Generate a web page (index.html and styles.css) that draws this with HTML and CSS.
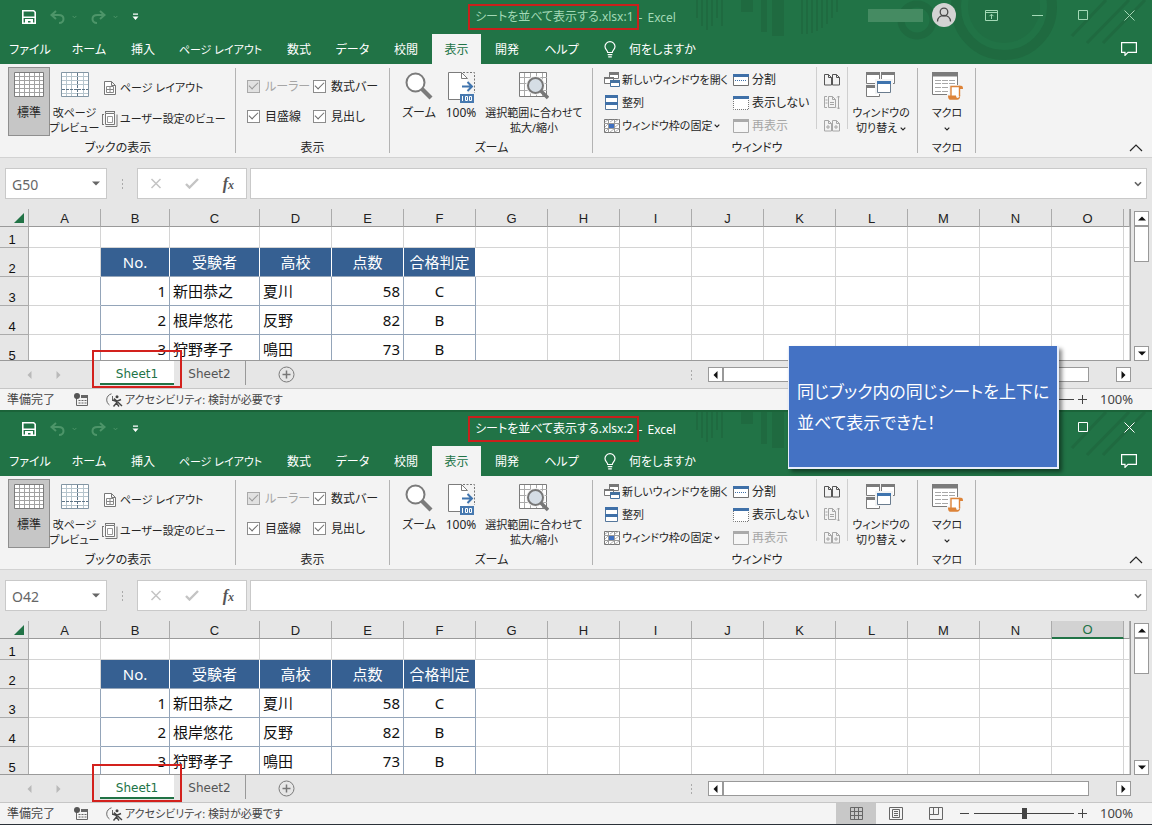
FILE: index.html
```html
<!DOCTYPE html>
<html lang="ja">
<head>
<meta charset="utf-8">
<meta name="viewport" content="width=device-width, initial-scale=1">
<title>シートを並べて表示する.xlsx - Excel</title>
<link rel="stylesheet" href="styles.css">
<script src="app.js" defer></script>
</head>
<body>

<svg class="sprite" aria-hidden="true">
  <symbol id="i-save" viewBox="0 0 14 14"><path d="M.8.8h10.9l1.5 1.5v10.9H.8z" fill="none" stroke="currentColor" stroke-width="1.6"/><path d="M1 6.5h12V8H1zM3 9h8v4.500H8.500V11H6v2.500H3z" fill="currentColor"/></symbol>
  <symbol id="i-undo" viewBox="0 0 15 14"><path d="M6 1 1.500 5 6 9M2 5h6.500c3.500 0 5 2 5 4s-1.500 4-4.500 4" fill="none" stroke="currentColor" stroke-width="2"/></symbol>
  <symbol id="i-redo" viewBox="0 0 15 14"><path d="M9 1l4.500 4L9 9M13 5H6.500c-3.500 0-5 2-5 4s1.500 4 4.500 4" fill="none" stroke="currentColor" stroke-width="2"/></symbol>
  <symbol id="i-custom" viewBox="0 0 7 8"><path d="M1 .5h5v1.200H1zM.5 3.500h6L3.500 7z" fill="currentColor"/></symbol>
  <symbol id="i-chev" viewBox="0 0 6 4"><path d="M.7.7 3 3 5.300.7" fill="none" stroke="currentColor" stroke-width="1.200"/></symbol>
  <symbol id="i-user" viewBox="0 0 24 24"><circle cx="12" cy="12" r="12" fill="#d3d3d3"/><circle cx="12" cy="9" r="3.800" fill="none" stroke="#4a4a4a" stroke-width="1.300"/><path d="M5.500 18.500c0-8 13-8 13 0" fill="none" stroke="#4a4a4a" stroke-width="1.300"/></symbol>
  <symbol id="i-ribbonopt" viewBox="0 0 13 11"><path d="M.5.5h12v10H.5zM.5 2.500h12M6.500 9V4.500M4.500 6.200l2-2 2 2" fill="none" stroke="currentColor"/></symbol>
  <symbol id="i-min" viewBox="0 0 11 11"><path d="M0 5.500h11" stroke="currentColor"/></symbol>
  <symbol id="i-max" viewBox="0 0 11 11"><path d="M.5.5h9v9h-9z" fill="none" stroke="currentColor"/></symbol>
  <symbol id="i-close" viewBox="0 0 11 11"><path d="M.5.5l10 10M10.500.5l-10 10" stroke="currentColor"/></symbol>
  <symbol id="i-comment" viewBox="0 0 16 14"><path d="M.6.6h14.800v9.800H7l-3 3v-3H.6z" fill="none" stroke="currentColor" stroke-width="1.200"/></symbol>
  <symbol id="i-bulb" viewBox="0 0 12 17"><path d="M3.700 11.500c0-2-2.700-2.800-2.700-5.900a5 5 0 0 1 10 0c0 3.100-2.700 3.900-2.700 5.900zM3.700 13.700h4.600M4.200 15.900h3.600" fill="none" stroke="currentColor" stroke-width="1.200"/></symbol>

  <symbol id="i-normal" viewBox="0 0 30 25"><path d="M.5.5h29v24H.5z" fill="#fff" stroke="#7c7c7c"/><path d="M5.500 1v23M10.500 1v23M15.500 1v23M20.500 1v23M25.500 1v23M1 4.500h28M1 8.500h28M1 12.500h28M1 16.500h28M1 20.500h28" stroke="#a2a2a2"/></symbol>
  <symbol id="i-break" viewBox="0 0 28 25"><path d="M.5.500h27v24H.5z" fill="#fff" stroke="#8396a4"/><path d="M5.500 1v23M10.500 1v23M22.500 1v23M1 4.500h26M1 8.500h26M1 12.500h26M1 21.500h26" stroke="#b6c5cd"/><path d="M16.500 1v23M1 17.500h26" stroke="#5d7486" stroke-dasharray="3 1"/></symbol>
  <symbol id="i-page" viewBox="0 0 12 14"><path d="M.5.5h7l4 4v9H.5zM7.500.5v4h4" fill="#fff" stroke="#777"/><path d="M2.500 5.500h7v6h-7zM2.500 8.500h7M6 5.500v6" fill="none" stroke="#888"/></symbol>
  <symbol id="i-userview" viewBox="0 0 16 16"><path d="M3.500 2.500h9v11h-9z" fill="#fff" stroke="#777"/><path d="M5.500 5.500h5v6h-5z" fill="#fff" stroke="#999"/><path d="M3.500.5h9M3.500 0v2M12.500 0v2M.5 3.500v10M0 3.500h2M0 13.500h2M15 3.500v12H3.500" fill="none" stroke="#777"/></symbol>
  <symbol id="i-zoom" viewBox="0 0 28 28"><path d="m17 17 9 9" stroke="#7b7b7b" stroke-width="4.200"/><circle cx="10.500" cy="10.500" r="9" fill="#fff" stroke="#7b7b7b" stroke-width="2"/></symbol>
  <symbol id="i-full" viewBox="0 0 27 31"><path d="M.5.500h13l6 6V27H.5z" fill="#fff"/><path d="M12 27.500H.5V.5h13l6 6M13.500.5v6h6" fill="none" stroke="#7c7c7c"/><path d="M15 .5h11.500V21" fill="none" stroke="#777" stroke-dasharray="2 1.500"/><path d="M14 14.500h9M19.500 10l4.500 4.500-4.500 4.500" fill="none" stroke="#3f74ae" stroke-width="2"/><path d="M12 22h14v9H12z" fill="#4779b0"/><path d="M14.500 24v5M17.500 24.500h2v4h-2zM21.500 24.500h2v4h-2z" fill="none" stroke="#fff"/></symbol>
  <symbol id="i-sel" viewBox="0 0 30 28"><path d="M.5.5h27v24H.5z" fill="#fff" stroke="#7c7c7c"/><path d="M5.500 1v23M11.500 1v23M17.500 1v23M23.500 1v23M1 5.500h27M1 11.500h27M1 18.500h27" stroke="#aaa"/><circle cx="16.500" cy="13.500" r="8" fill="#f6f6f6" stroke="#f3f3f3" stroke-width="3"/><circle cx="16.500" cy="13.500" r="7.500" fill="#d5dde5" stroke="#777" stroke-width="2"/><path d="m22 19 7 7" stroke="#777" stroke-width="3.500"/></symbol>
  <symbol id="i-new" viewBox="0 0 16 15"><path d="M5.500.5h9v6h-9z" fill="#fff" stroke="#777"/><path d="M5 0h10v3H5z" fill="#777"/><path d="M.5 5.500h9v6h-9z" fill="#fff" stroke="#777"/><path d="M0 5h10v2H0z" fill="#777"/><path d="M6.500 8.500h9v6h-9z" fill="#fff" stroke="#44719f"/><path d="M6 8h10v3H6z" fill="#44719f"/></symbol>
  <symbol id="i-arr" viewBox="0 0 16 15"><path d="M1.500.5h12v14h-12z" fill="#fff" stroke="#55779c"/><path d="M1 0h13v3H1zM1 7h13v3H1z" fill="#3f70a8"/></symbol>
  <symbol id="i-freeze" viewBox="0 0 16 14"><path d="M.5.5h15v13H.5z" fill="#fff" stroke="#777"/><path d="M4.500.5v13M10.500.5v13M0 4.500h16M0 9.500h16" fill="none" stroke="#9a9a9a"/><path d="M1 3l3-2M1 8l3-3M11 3l4-3M1 13l3-3M6 13l4-3M11 8l4-3M11 13l4-3M6 3l3-2" fill="none" stroke="#b4b4b4"/><path d="M5 5h5v4H5z" fill="#3f70c0"/></symbol>
  <symbol id="i-split" viewBox="0 0 16 12"><path d="M.5.5h15v11H.5z" fill="#fff" stroke="#6f6f6f"/><path d="M0 0h16v3H0z" fill="#3f70a8"/><path d="M2 6.500h12" stroke="#3f70a8" stroke-dasharray="1 1"/></symbol>
  <symbol id="i-hide" viewBox="0 0 16 14"><path d="M.5 3v10.500h15V3" fill="#fff" stroke="#777" stroke-dasharray="1 1"/><path d="M0 0h16v3H0z" fill="#3f70a8"/></symbol>
  <symbol id="i-show" viewBox="0 0 16 14"><path d="M.5.500h15v13H.5z" fill="#f6f6f6" stroke="#aaa"/><path d="M0 0h16v3H0z" fill="#aaa"/></symbol>
  <symbol id="i-side" viewBox="0 0 16 12"><path d="M.5.500h4l3 3v7.500h-7zM8.500.5h4l3 3v7.500h-7zM4.500.5v3h3M12.500.5v3h3" fill="none" stroke="currentColor"/></symbol>
  <symbol id="i-sync" viewBox="0 0 16 15"><path d="M3 1.500H.5v11H3M4.500 1.500h4l3 3v8h-7zM8.500 1.500v3h3M6 7.500h4M6 9.500h4M1.500 5h2M1.500 8h2M14.500 1v13M13 2.500l1.500-1.500L16 2.500M13 12.500l1.500 1.500 1.500-1.500" fill="none" stroke="currentColor"/></symbol>
  <symbol id="i-reset" viewBox="0 0 16 12"><path d="M.5.500h4l3 3v7.500h-7zM8.500.5h4l3 3v7.500h-7zM4.500.5v3h3M12.500.5v3h3M2 7h4M4 5v4M10 7h4M12 5v4" fill="none" stroke="currentColor"/></symbol>
  <symbol id="i-switch" viewBox="0 0 30 25"><path d="M.5.5h13v11H.5zM15.500.5h13v11h-13zM.5 13.500h13v11H.5z" fill="#fff" stroke="#7b7b7b"/><path d="M0 0h14v3H0zM15 0h14v3H15zM0 13h14v3H0z" fill="#7b7b7b"/><path d="M10.500 8.500h15v12h-15z" fill="#fff" stroke="#f3f3f3" stroke-width="3"/><path d="M11.500 9.500h13v11h-13z" fill="#fff" stroke="#6a7c8e"/><path d="M11 9h14v3H11z" fill="#3f74ae"/></symbol>
  <symbol id="i-macro" viewBox="0 0 31 28"><path d="M.5.5h25v22H.5z" fill="#fff" stroke="#7b7b7b"/><path d="M0 0h26v4.500H0z" fill="#7b7b7b"/><path d="M3 8.500h20M3 11.500h20M3 15.500h20M3 19.500h13" stroke="#a7a7a7" stroke-dasharray="6 1"/><path d="M17 13h13v6h-2v8H15v-5h2z" fill="#f3f3f3"/><path d="M19 24V14.500h8.500V24" fill="#fff" stroke="#dd8338" stroke-width="1.400"/><path d="M27 13.800h2c1.500 0 2 1 2 3.200h-3zM16 23.500h8c0 1.500.5 2.500 1.500 2.500s2-1 2-2.500h.7c0 3-1.200 4.200-3 4.200h-7c-1.500 0-2.200-1.500-2.200-4.200z" fill="#dd8338"/></symbol>
  <symbol id="i-up" viewBox="0 0 14 8"><path d="M1 7l6-6 6 6" fill="none" stroke="currentColor" stroke-width="1.200"/></symbol>

  <symbol id="i-cancel" viewBox="0 0 12 11"><path d="M1.500 1l9 9M10.500 1l-9 9" stroke="currentColor" stroke-width="1.500"/></symbol>
  <symbol id="i-ok" viewBox="0 0 14 11"><path d="M1 6l3.500 3.500L13 1" fill="none" stroke="currentColor" stroke-width="2.400"/></symbol>
  <symbol id="i-tri-d" viewBox="0 0 8 5"><path d="M0 .5h8l-4 4z" fill="currentColor"/></symbol>
  <symbol id="i-tri-u" viewBox="0 0 8 5"><path d="M0 4.500h8l-4-4z" fill="currentColor"/></symbol>
  <symbol id="i-tri-l" viewBox="0 0 5 8"><path d="M4.500 0v8l-4-4z" fill="currentColor"/></symbol>
  <symbol id="i-tri-r" viewBox="0 0 5 8"><path d="M.5 0v8l4-4z" fill="currentColor"/></symbol>
  <symbol id="i-corner" viewBox="0 0 10 10"><path d="M10 0v10H0z" fill="#217346"/></symbol>
  <symbol id="i-add" viewBox="0 0 17 17"><circle cx="8.500" cy="8.500" r="7.500" fill="none" stroke="#7b7b7b"/><path d="M4.500 8.500h8M8.500 4.500v8" stroke="#777" stroke-width="1.500"/></symbol>
  <symbol id="i-rec" viewBox="0 0 14 13"><path d="M2.500 5v7.500h11v-10H7" fill="none" stroke="#666"/><path d="M7 2h7v3H7zM4.500 7h2v1h-2zM7.500 7h2v1h-2zM10.500 7h2v1h-2zM4.500 9.500h2v1h-2zM7.500 9.500h2v1h-2zM10.500 9.500h2v1h-2z" fill="#666"/><circle cx="3" cy="3" r="3" fill="#555"/></symbol>
  <symbol id="i-acc" viewBox="0 0 17 14"><path d="M5.500.8C-.5 2.500-.5 9.500 3.500 12M6.500 3v5" fill="none" stroke="#666"/><circle cx="11" cy="3.800" r="1.500" fill="#444"/><path d="M6.500 7l4 1.500L15 6.500M10.500 8v2L7.500 13.500M10.500 10l2.500 3.500M8 5.500l8 7.500" fill="none" stroke="#444" stroke-width="1.400"/></symbol>
  <symbol id="i-vgrid" viewBox="0 0 13 13"><path d="M.5.5h12v12H.5zM4.500.5v12M8.500.5v12M.5 4.500h12M.5 8.500h12" fill="none" stroke="#666"/></symbol>
  <symbol id="i-vpage" viewBox="0 0 14 13"><path d="M.5.500h13v12H.5zM3.500 2.500h7v8h-7zM5 4.500h4M5 6.500h4M5 8.500h4" fill="none" stroke="#666"/></symbol>
  <symbol id="i-vbreak" viewBox="0 0 14 13"><path d="M.5.500h13v12H.5zM4.500.5v7M9.500.5v7h-9" fill="none" stroke="#666"/></symbol>
  <symbol id="i-art" viewBox="0 0 460 64">
    <g fill="none" stroke="#1f6a40">
      <path d="M5 0v18M10 0v26M15 0v30M20 0v26M25 0v18M30 0v26" stroke-width="2"/>
      <path d="M55 0v12M86 0v36" stroke-width="12"/><path d="M72 0v32" stroke-width="6"/>
      <path d="M110 0v34M115 0v34M120 0v33M125 0v31M130 0v28M135 0v24M140 0v18M145 0v12" stroke-width="2"/>
      <circle cx="225" cy="20" r="16" stroke-width="7"/>
      <circle cx="312" cy="7" r="48" stroke-width="10"/>
      <path d="M395 43l42-43M411 43l42-43M380 36l34-36" stroke-width="3"/>
    </g>
    <circle cx="312" cy="7" r="36" fill="#206e43"/>
  </symbol>
</svg>

<main class="desktop" id="desktop"></main>
<aside class="callout">同じブック内の同じシートを上下に<br>並べて表示できた！</aside>

<template id="window-template">
  <section class="window">
    <div class="top">
      <svg class="art" aria-hidden="true"><use href="#i-art"/></svg>
      <header class="titlebar">
        <div class="quick">
          <button class="bare" aria-label="上書き保存"><svg width="14" height="14"><use href="#i-save"/></svg></button>
          <button class="bare dim" aria-label="元に戻す"><svg width="15" height="14"><use href="#i-undo"/></svg><svg width="5" height="4"><use href="#i-chev"/></svg></button>
          <button class="bare dim" aria-label="やり直し"><svg width="15" height="14"><use href="#i-redo"/></svg><svg width="5" height="4"><use href="#i-chev"/></svg></button>
          <button class="bare" aria-label="クイック アクセス ツール バーのユーザー設定"><svg width="7" height="8"><use href="#i-custom"/></svg></button>
        </div>
        <h1 class="title"><span class="file marked"></span><span class="dash">-</span><span>Excel</span></h1>
        <div class="right">
          <div class="account"><span class="account-name"></span><svg width="24" height="24"><use href="#i-user"/></svg></div>
          <div class="controls">
            <button class="bare" aria-label="リボンの表示オプション"><svg width="13" height="11"><use href="#i-ribbonopt"/></svg></button>
            <button class="bare" aria-label="最小化"><svg width="11" height="11"><use href="#i-min"/></svg></button>
            <button class="bare" aria-label="最大化"><svg width="11" height="11"><use href="#i-max"/></svg></button>
            <button class="bare" aria-label="閉じる"><svg width="11" height="11"><use href="#i-close"/></svg></button>
          </div>
        </div>
      </header>

      <nav class="tabs">
        <button class="tab">ファイル</button><button class="tab">ホーム</button><button class="tab">挿入</button><button class="tab long">ページ レイアウト</button><button class="tab">数式</button><button class="tab">データ</button><button class="tab">校閲</button><button class="tab active">表示</button><button class="tab">開発</button><button class="tab">ヘルプ</button>
        <button class="tab tell"><svg width="12" height="17"><use href="#i-bulb"/></svg>何をしますか</button>
        <button class="bare comment" aria-label="コメント"><svg width="16" height="14"><use href="#i-comment"/></svg></button>
      </nav>
    </div>

    <div class="ribbon">
      <div class="group g-book">
        <div class="tools">
          <button class="big pressed"><svg width="30" height="25"><use href="#i-normal"/></svg><span>標準</span></button>
          <button class="big tight"><svg width="28" height="25"><use href="#i-break"/></svg><span>改ページ<br>プレビュー</span></button>
          <div class="stack two tight">
            <button class="small"><svg width="16" height="14"><use href="#i-page"/></svg>ページ レイアウト</button>
            <button class="small"><svg width="16" height="16"><use href="#i-userview"/></svg>ユーザー設定のビュー</button>
          </div>
        </div>
        <div class="caption">ブックの表示</div>
      </div>
      <div class="group g-show">
        <div class="tools checks">
          <label class="check off"><input type="checkbox" checked disabled>ルーラー</label>
          <label class="check"><input type="checkbox" checked>数式バー</label>
          <label class="check"><input type="checkbox" checked>目盛線</label>
          <label class="check"><input type="checkbox" checked>見出し</label>
        </div>
        <div class="caption">表示</div>
      </div>
      <div class="group g-zoom">
        <div class="tools">
          <button class="big"><svg width="28" height="28"><use href="#i-zoom"/></svg><span>ズーム</span></button>
          <button class="big"><svg width="27" height="31"><use href="#i-full"/></svg><span>100%</span></button>
          <button class="big wide tight"><svg width="30" height="28"><use href="#i-sel"/></svg><span>選択範囲に合わせて<br>拡大/縮小</span></button>
        </div>
        <div class="caption">ズーム</div>
      </div>
      <div class="group g-window">
        <div class="tools">
          <div class="stack first tight">
            <button class="small"><svg width="16" height="15"><use href="#i-new"/></svg>新しいウィンドウを開く</button>
            <button class="small"><svg width="16" height="15"><use href="#i-arr"/></svg>整列</button>
            <button class="small"><svg width="16" height="14"><use href="#i-freeze"/></svg>ウィンドウ枠の固定 <svg width="6" height="4"><use href="#i-chev"/></svg></button>
          </div>
          <div class="stack second">
            <button class="small"><svg width="16" height="12"><use href="#i-split"/></svg>分割</button>
            <button class="small"><svg width="16" height="14"><use href="#i-hide"/></svg>表示しない</button>
            <button class="small off" disabled><svg width="16" height="14"><use href="#i-show"/></svg>再表示</button>
          </div>
          <div class="stack icons">
            <button class="small" aria-label="並べて比較"><svg width="16" height="12"><use href="#i-side"/></svg></button>
            <button class="small off" disabled aria-label="同時にスクロール"><svg width="16" height="15"><use href="#i-sync"/></svg></button>
            <button class="small off" disabled aria-label="ウィンドウの位置を元に戻す"><svg width="16" height="12"><use href="#i-reset"/></svg></button>
          </div>
          <button class="big switch tight"><svg width="30" height="25"><use href="#i-switch"/></svg><span>ウィンドウの<br>切り替え <svg width="6" height="4"><use href="#i-chev"/></svg></span></button>
        </div>
        <div class="caption">ウィンドウ</div>
      </div>
      <div class="group g-macro">
        <div class="tools">
          <button class="big tight"><svg width="31" height="28"><use href="#i-macro"/></svg><span>マクロ<br><svg width="6" height="4"><use href="#i-chev"/></svg></span></button>
        </div>
        <div class="caption tight">マクロ</div>
      </div>
      <button class="bare collapse" aria-label="リボンを折りたたむ"><svg width="14" height="8"><use href="#i-up"/></svg></button>
    </div>

    <div class="formula">
      <div class="namebox"><input class="ref" aria-label="名前ボックス"><svg width="8" height="5"><use href="#i-tri-d"/></svg></div>
      <span class="grip"></span>
      <div class="fx">
        <button class="bare faint" aria-label="キャンセル"><svg width="12" height="11"><use href="#i-cancel"/></svg></button>
        <button class="bare faint" aria-label="入力"><svg width="14" height="11"><use href="#i-ok"/></svg></button>
        <button class="bare fn" aria-label="関数の挿入">f<small>x</small></button>
      </div>
      <div class="entry"><input aria-label="数式バー"><svg width="8" height="6" viewBox="0 0 6 4"><use href="#i-chev"/></svg></div>
    </div>

    <div class="body">
      <div class="grid">
        <table class="cells">
          <colgroup></colgroup>
          <thead></thead>
          <tbody></tbody>
        </table>
      </div>
      <div class="vscroll">
        <button class="sb" aria-label="上へ"><svg width="8" height="5"><use href="#i-tri-u"/></svg></button>
        <div class="vthumb"></div>
        <button class="sb last" aria-label="下へ"><svg width="8" height="5"><use href="#i-tri-d"/></svg></button>
      </div>
    </div>

    <div class="sheets">
      <div class="arrows"><svg width="5" height="8"><use href="#i-tri-l"/></svg><svg width="5" height="8"><use href="#i-tri-r"/></svg></div>
      <button class="sheet current">Sheet1</button>
      <button class="sheet">Sheet2</button>
      <button class="bare add" aria-label="新しいシート"><svg width="17" height="17"><use href="#i-add"/></svg></button>
      <span class="grip"></span>
      <div class="hscroll">
        <button class="sb" aria-label="左へ"><svg width="5" height="8"><use href="#i-tri-l"/></svg></button>
        <div class="hthumb"></div>
        <button class="sb last" aria-label="右へ"><svg width="5" height="8"><use href="#i-tri-r"/></svg></button>
      </div>
      <span class="sheet-mark"></span>
    </div>

    <footer class="status">
      <span class="ready">準備完了</span>
      <svg width="14" height="13"><use href="#i-rec"/></svg>
      <span class="access tight"><svg width="17" height="14"><use href="#i-acc"/></svg>アクセシビリティ: 検討が必要です</span>
      <div class="views">
        <button class="view on" aria-label="標準"><svg width="13" height="13"><use href="#i-vgrid"/></svg></button>
        <button class="view" aria-label="ページ レイアウト"><svg width="14" height="13"><use href="#i-vpage"/></svg></button>
        <button class="view" aria-label="改ページ プレビュー"><svg width="14" height="13"><use href="#i-vbreak"/></svg></button>
      </div>
      <button class="bare step" aria-label="縮小"><svg width="9" height="9" viewBox="0 0 9 9"><path d="M0 4.500h9" stroke="currentColor"/></svg></button>
      <input class="slider" type="range" min="0" max="100" value="50" aria-label="ズーム">
      <button class="bare step" aria-label="拡大"><svg width="9" height="9" viewBox="0 0 9 9"><path d="M0 4.500h9M4.500 0v9" stroke="currentColor"/></svg></button>
      <span class="percent">100%</span>
    </footer>
  </section>
</template>
</body>
</html>
```

FILE: styles.css
```css
* { box-sizing: border-box; }

body {
  margin: 0;
  font: 12px/15px "Noto Sans", "Noto Sans CJK JP", sans-serif;
  font-feature-settings: "palt";
  color: #262626;
  position: relative;
}

button, input { font: inherit; font-feature-settings: inherit; color: inherit; margin: 0; }
button { border: 0; padding: 0; background: none; white-space: nowrap; }
svg { display: block; flex: none; }
.sprite { position: absolute; width: 0; height: 0; }
.bare { display: flex; align-items: center; justify-content: center; }
.tight { font-size: 11px; }

.desktop {
  display: grid;
  grid-template-rows: 410fr 415fr;
  height: 100vh;
  min-height: 700px;
}

.window { display: flex; flex-direction: column; min-height: 0; min-width: 0; background: #e6e6e6; }
.window.second-window { border-top: 2px solid #1b6339; border-bottom: 1px solid #2b3138; }

/* Title bar and ribbon tabs share one green band */
.top { position: relative; flex: none; background: #217346; color: #fff; }
.art { position: absolute; right: 0; top: 0; width: 460px; height: 64px; }
.titlebar {
  position: relative;
  display: grid;
  grid-template-columns: 1fr auto 1fr;
  align-items: center;
  height: 34px;
}
.quick { display: flex; align-items: center; gap: 14px; padding-left: 22px; }
.quick .bare { gap: 7px; height: 30px; }
.quick .dim { color: #4d9569; }
.title { display: flex; align-items: center; margin: 0 8px 0 0; font-size: 12px; font-weight: 400; white-space: nowrap; }
.marked { border: 2px solid #c8201c; padding: 1px 3px 1px 5px; line-height: 20px; }
.dash { width: 9px; overflow: hidden; }
.first-window .title, .first-window .controls { color: #a3d9b6; }
.right { display: flex; justify-content: flex-end; align-items: center; align-self: start; height: 30px; }
.account { display: flex; align-items: center; gap: 9px; margin-right: 12px; }
.account-name { width: 55px; height: 13px; background: #458b62; }
.second-window .account { visibility: hidden; }
.controls { display: grid; grid-template-columns: repeat(4, 46px); height: 30px; }

.tabs {
  position: relative;
  display: grid;
  grid-template-columns: 60px 58px 50px 105px 52px 55px 52px 49px 52px 57px auto 1fr;
  height: 30px;
}
.tab { display: flex; align-items: center; justify-content: center; }
.tab.active { background: #f3f3f3; color: #217346; }
.tab.long { font-size: 11px; }
.tell { gap: 13px; padding-left: 14px; }
.comment { justify-self: end; margin-right: 15px; }

/* Ribbon */
.ribbon { display: flex; height: 94px; flex: none; background: #f3f3f3; border-bottom: 1px solid #d2d2d2; }
.group { display: flex; flex-direction: column; position: relative; }
.group::after { content: ""; position: absolute; right: 0; top: 4px; bottom: 4px; border-right: 1px solid #b3b3b3; }
.g-book { width: 236px; padding-left: 8px; }
.g-show { width: 154px; padding-left: 11px; }
.g-zoom { width: 203px; padding-left: 8px; }
.g-window { width: 325px; padding-left: 11px; }
.g-macro { width: 58px; }
.tools { display: flex; height: 76px; padding-top: 3px; }
.caption { text-align: center; line-height: 18px; margin-right: 8px; }
.g-show .caption { margin-right: 12px; }
.g-macro .caption { margin-right: 0; }

.big { display: flex; flex-direction: column; align-items: center; width: 42px; height: 70px; padding-top: 5px; }
.big > svg { margin-bottom: auto; }
.big > span { height: 32px; text-align: center; }
.big span svg { display: inline-block; vertical-align: middle; }
.g-book .big + .big { width: 49px; }
.g-book .pressed { height: 69px; background: #c6c6c6; border: 1px solid #8f8f8f; padding-top: 4px; }
.g-book .pressed > span { height: 30px; }
.wide { width: 104px; }
.g-macro .big { width: 58px; }
.stack { display: grid; grid-auto-rows: 23px; align-content: start; padding-top: 1px; }
.stack.two { grid-auto-rows: 31px; padding-top: 5px; padding-left: 3px; }
.small { display: flex; align-items: center; gap: 2px; }
.small.off, .check.off { color: #a6a6a6; }
.first { width: 129px; }
.second { width: 83px; }
.second .small { gap: 3px; }
.icons { width: 32px; justify-items: center; border: solid #cfcfcf; border-width: 0 1px; height: 62px; color: #555; }
.switch { width: 66px; }
.checks { display: grid; grid-template-columns: 66px 70px; grid-auto-rows: 30px; padding-top: 7px; align-content: start; }
.check { display: flex; align-items: center; gap: 5px; white-space: nowrap; }
.check input {
  appearance: none;
  width: 13px;
  height: 13px;
  border: 1px solid #8c8c8c;
  background: #fff;
  display: grid;
  place-items: center;
}
.check input:checked::before {
  content: "";
  width: 8px;
  height: 4px;
  margin-bottom: 3px;
  border: solid #6a6a6a;
  border-width: 0 0 1px 1px;
  transform: rotate(-45deg);
}
.check input:disabled { background: #e1e1e1; border-color: #a9a9a9; }
.check input:disabled::before { border-color: #999; }
.collapse { margin-left: auto; margin-right: 9px; align-self: flex-end; height: 18px; }

/* Formula bar */
.formula { display: flex; align-items: center; flex: none; height: 51px; padding: 0 5px; }
.namebox, .fx, .entry { display: flex; align-items: center; height: 31px; background: #fff; border: 1px solid #c9c9c9; color: #666; }
.namebox { width: 102px; padding: 0 6px; }
.namebox input, .entry input { flex: 1; min-width: 0; border: 0; background: none; outline: 0; padding: 0; }
.namebox input { font-size: 14px; line-height: 20px; padding-top: 2px; }
.grip { width: 3px; height: 12px; background: radial-gradient(circle, #aaa 1px, transparent 1px) 0 0 / 3px 4px; }
.formula .grip { margin: 0 13px 0 14px; }
.fx { width: 110px; justify-content: space-between; padding: 0 12px; margin-right: 3px; }
.faint { color: #c4c4c4; }
.fn { font: italic 700 16px/20px "Liberation Serif", serif; color: #555; }
.fn small { font-size: 12px; padding-top: 3px; }
.entry { flex: 1; padding-right: 4px; }

/* Cells */
.body { display: flex; flex: 1; min-height: 0; }
.grid { flex: 1; min-width: 0; overflow: hidden; border: solid #9a9a9a; border-width: 0 1px 1px 0; }
.cells { table-layout: fixed; border-spacing: 0; width: 100%; font-size: 15px; line-height: 20px; font-feature-settings: normal; }
.c-head { width: 29px; }
.c-std { width: 72px; }
.c-b { width: 69px; }
.c-c { width: 90px; }
.cells th, .cells td { padding: 0; overflow: hidden; white-space: nowrap; border: solid #d4d4d4; border-width: 0 1px 1px 0; }
.cells thead th {
  height: 18px;
  border-color: #ababab #ababab #9a9a9a;
  font: 13px/14px "Liberation Sans", sans-serif;
  color: #222;
  background: #e6e6e6;
  vertical-align: bottom;
}
.cells thead th.sel { background: #d2d2d2; color: #217346; border-bottom: 2px solid #217346; }
.cells thead .corner svg { margin: 0 4px 3px auto; }
.cells tbody th {
  height: 29px;
  padding-right: 4px;
  vertical-align: bottom;
  background: #e6e6e6;
  border-color: #ababab;
  font: 13px/14px "Liberation Sans", sans-serif;
  color: #111;
}
.cells tbody tr:first-child th { height: 21px; }
.cells td { background: #fff; color: #111; border-color: #d4d4d4; }
.cells td.edge { border-right-color: #94a5b9; }
.cells td.data { border-color: #94a5b9; }
.cells td.head { background: #366092; color: #fff; text-align: center; border-right-color: #fff; border-bottom-color: #94a5b9; }
.cells td.num { text-align: right; padding-right: 3px; }
.cells td.txt { padding-left: 3px; }
.cells td.mid { text-align: center; }

.vscroll { width: 21px; display: flex; flex-direction: column; padding: 2px 3px 0; }
.sb { display: flex; align-items: center; justify-content: center; flex: none; width: 15px; height: 15px; background: #fff; border: 1px solid #999; color: #111; }
.vthumb { height: 36px; background: #fff; border: 1px solid #999; }
.vscroll .last { margin-top: auto; }

/* Sheet tabs */
.sheets { position: relative; display: flex; align-items: center; flex: none; height: 28px; padding-right: 21px; border-bottom: 1px solid #c6c6c6; }
.arrows { width: 100px; display: flex; gap: 24px; padding-left: 27px; color: #b9b9b9; }
.sheet { height: 24px; align-self: flex-start; width: 72px; padding-top: 2px; font: 12px/22px "DejaVu Sans", sans-serif; color: #555; border-right: 1px solid #999; margin-right: 32px; }
.sheet.current { width: 74px; margin-right: 0; background: #fff; color: #217346; border-right: 0; border-bottom: 2px solid #217346; }
.sheets > .grip { margin-left: auto; margin-right: 15px; }
.hscroll { display: flex; width: 423px; }
.hthumb { flex: 1; margin-right: 27px; background: #fff; border: 1px solid #999; }
.sheet-mark { position: absolute; left: 92px; top: -11px; width: 90px; height: 38px; border: 2px solid #d3211d; z-index: 2; }

/* Status bar */
.status { display: flex; align-items: center; flex: none; height: 21px; padding-right: 18px; background: #f4f4f4; color: #444; }
.ready { width: 74px; padding-left: 7px; }
.access { display: flex; align-items: center; gap: 2px; margin-left: 18px; }
.views { display: flex; margin-left: auto; align-self: stretch; }
.view { width: 40px; display: flex; align-items: center; justify-content: center; }
.view.on { background: #c8c8c8; }
.step { margin-left: 4px; }
.slider { appearance: none; width: 100px; height: 12px; margin: 0 0 0 5px; background: linear-gradient(#444, #444) center / 100% 1px no-repeat; }
.slider::-webkit-slider-thumb { appearance: none; width: 5px; height: 11px; background: #444; }
.percent { margin-left: 13px; width: 34px; font-size: 13px; }

/* Note over the two windows */
.callout {
  position: absolute;
  top: 346px;
  right: 93px;
  width: 271px;
  height: 123px;
  padding: 30px 8px;
  border: 1px solid #e8eefb;
  border-width: 0 2px 2px 1px;
  background: #4472c4;
  color: #fff;
  font-size: 17px;
  line-height: 31px;
  white-space: nowrap;
  box-shadow: 3px 3px 4px rgba(0, 0, 0, .45);
  z-index: 3;
}
```

FILE: app.js
```js
const letters = ["A", "B", "C", "D", "E", "F", "G", "H", "I", "J", "K", "L", "M", "N", "O", ""];

const sheetRows = [
  [],
  ["No.", "受験者", "高校", "点数", "合格判定"],
  ["1", "新田恭之", "夏川", "58", "C"],
  ["2", "根岸悠花", "反野", "82", "B"],
  ["3", "狩野孝子", "鳴田", "73", "B"]
];

const dataClasses = ["num", "txt", "txt", "num", "mid"];

function columnClass(letter) {
  if (letter === "B") return "c-b";
  if (letter === "C") return "c-c";
  return letter ? "c-std" : "c-rest";
}

function buildCells(table, selected) {
  table.querySelector("colgroup").innerHTML =
    '<col class="c-head">' + letters.map(l => `<col class="${columnClass(l)}">`).join("");

  table.tHead.innerHTML =
    '<tr><th class="corner"><svg width="10" height="10"><use href="#i-corner"/></svg></th>' +
    letters.map(l => `<th${l && l === selected ? ' class="sel"' : ""}>${l}</th>`).join("") + "</tr>";

  table.tBodies[0].innerHTML = sheetRows.map((row, r) =>
    `<tr><th>${r + 1}</th>` + letters.map((l, c) => {
      const value = row[c - 1];
      if (value !== undefined) {
        return `<td class="${r === 1 ? "head" : "data " + dataClasses[c - 1]}">${value}</td>`;
      }
      return `<td${c === 0 && r > 1 ? ' class="edge"' : ""}></td>`;
    }).join("") + "</tr>").join("");
}

const windows = [
  { name: "first-window", file: "シートを並べて表示する.xlsx:1", ref: "G50", selected: null },
  { name: "second-window", file: "シートを並べて表示する.xlsx:2", ref: "O42", selected: "O" }
];

const template = document.getElementById("window-template");
for (const w of windows) {
  const node = template.content.cloneNode(true);
  node.querySelector(".window").classList.add(w.name);
  node.querySelector(".file").textContent = w.file;
  node.querySelector(".ref").value = w.ref;
  buildCells(node.querySelector(".cells"), w.selected);
  document.getElementById("desktop").append(node);
}
```
